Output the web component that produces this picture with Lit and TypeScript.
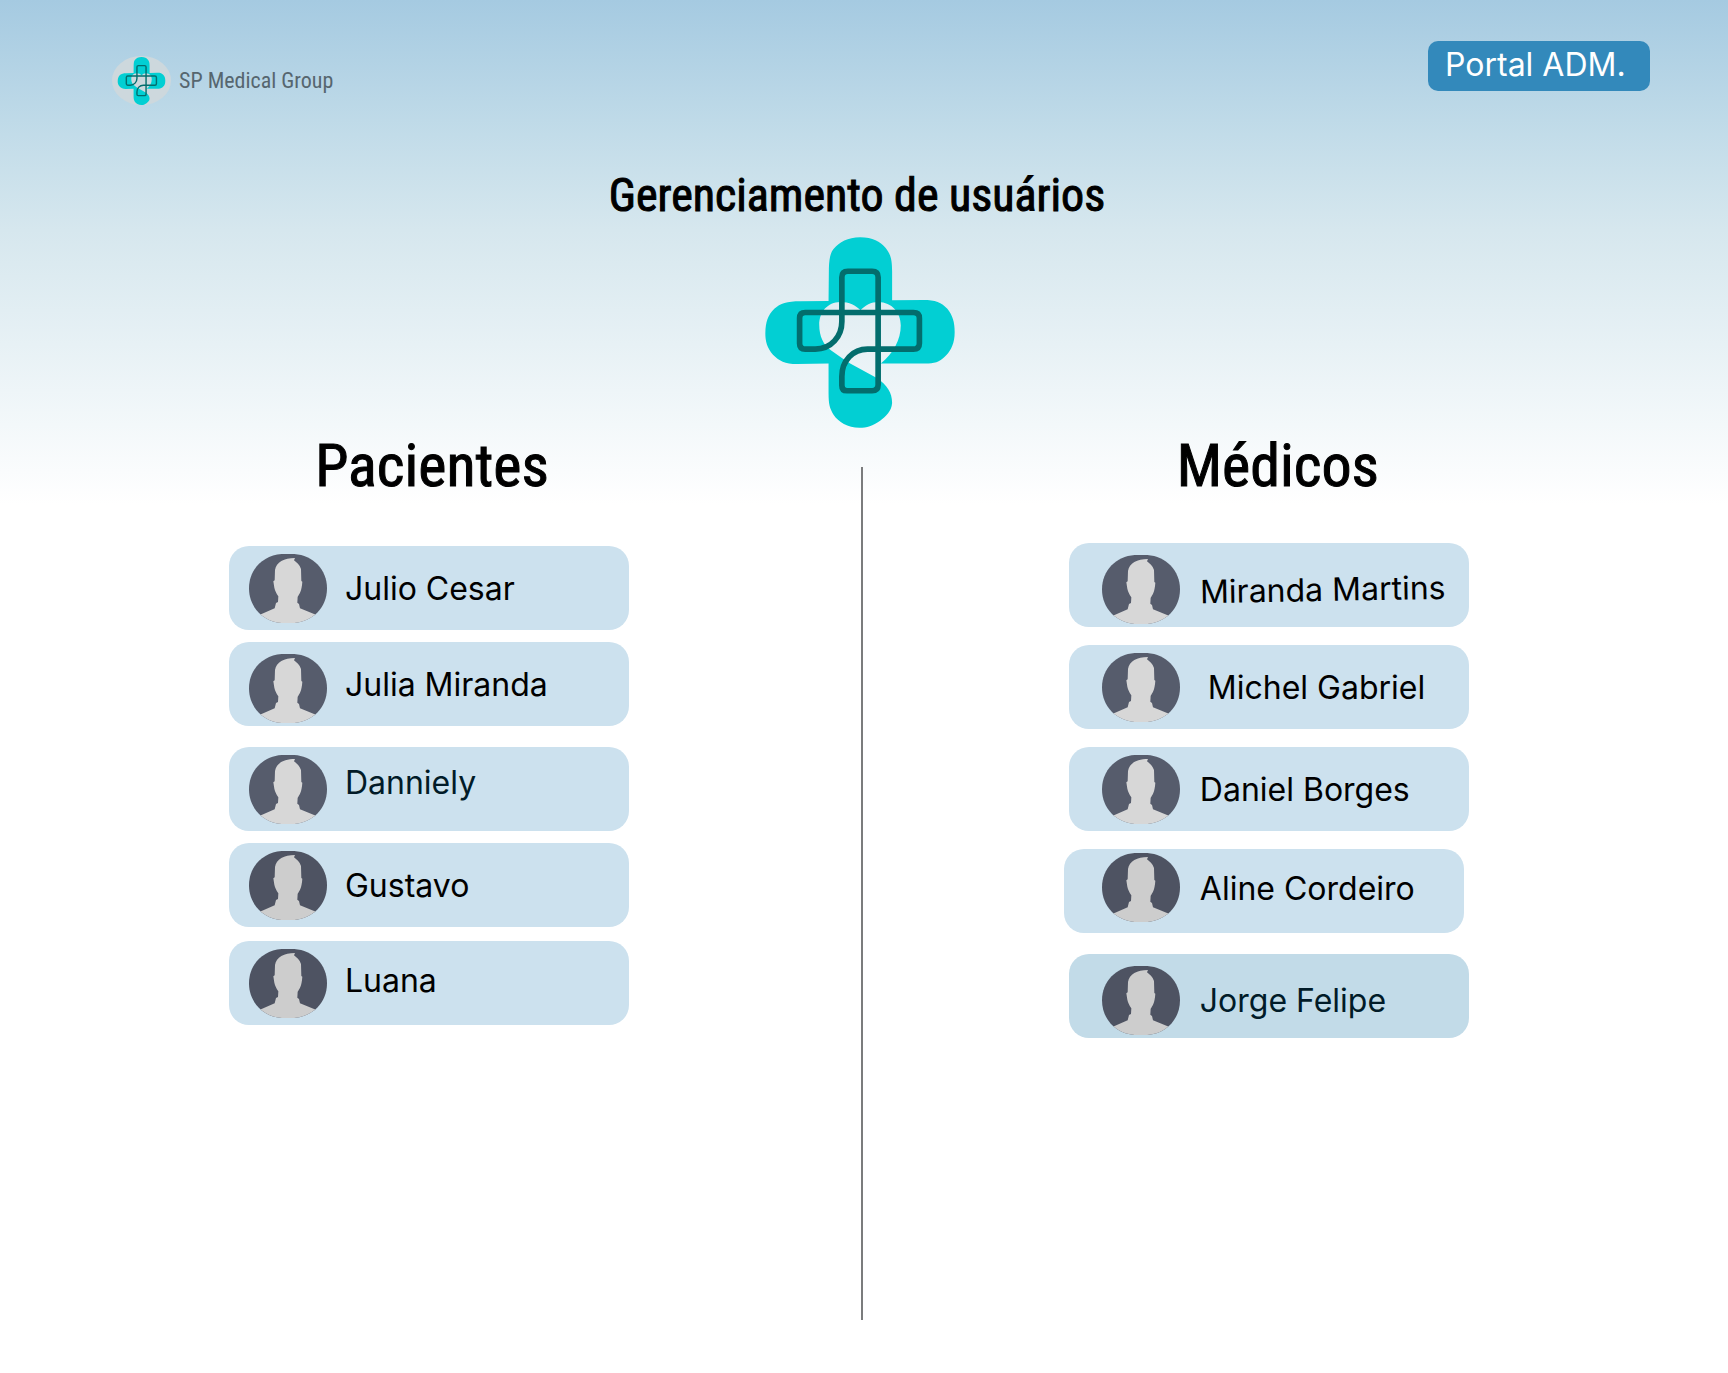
import { LitElement, html, css, svg } from "lit";
import { customElement, property } from "lit/decorators.js";
import { classMap } from "lit/directives/class-map.js";

type Level = "high" | "raised" | "mid" | "low";
type Gap = "none" | "tight" | "small" | "medium" | "large";

interface User {
  name: string;
  gap: Gap;
  photo: Level;
  text: Level;
  deep?: boolean;
  shaded?: boolean;
  ink?: boolean;
  outset?: boolean;
  indent?: boolean;
  tilt?: boolean;
}

const patients: User[] = [
  { name: "Julio Cesar", gap: "none", photo: "mid", text: "mid" },
  { name: "Julia Miranda", gap: "tight", photo: "low", text: "mid" },
  { name: "Danniely", gap: "large", photo: "mid", text: "high", ink: true },
  { name: "Gustavo", gap: "tight", photo: "mid", text: "mid", shaded: true },
  { name: "Luana", gap: "small", photo: "mid", text: "raised", shaded: true },
];

const doctors: User[] = [
  { name: "Miranda Martins", gap: "none", photo: "low", text: "low", tilt: true },
  { name: "Michel Gabriel", gap: "medium", photo: "mid", text: "mid", indent: true },
  { name: "Daniel Borges", gap: "medium", photo: "mid", text: "mid" },
  { name: "Aline Cordeiro", gap: "medium", photo: "high", text: "raised", shaded: true, outset: true },
  { name: "Jorge Felipe", gap: "large", photo: "low", text: "low", shaded: true, deep: true, ink: true },
];

@customElement("medical-logo")
export class MedicalLogo extends LitElement {
  static styles = css`
    :host { display: block; }
    .mark { display: block; width: 100%; height: 100%; }
    .body { fill: #02cfd3; }
    .line { fill: none; stroke: #036d6d; stroke-width: 17; stroke-linejoin: round; }
  `;
  render() {
    return html`<svg class="mark" viewBox="44 36 571 574" aria-hidden="true">
      ${svg`
      <path class="body" d="M235 228 L236 130 C237 95 243 80 250 72 C268 52 292 37 330 37 C368 37 390 50 406 68
        C420 86 426 100 426 140 L426 226 L520 225 C555 225 575 232 592 252 C608 272 614 292 614 322
        C614 355 603 375 590 390 C574 407 560 416 535 416 L392 416
        C430 385 452 345 452 302 C452 262 425 232 385 231 C362 231 345 241 331 256
        C317 241 298 231 270 231 C232 232 207 260 207 300 C207 335 220 362 243 377
        L275 400 L300 416 L380 460 C412 482 426 505 426 535 C424 560 408 575 390 588
        C368 604 350 609 328 609 C292 609 265 592 250 570 C239 552 235 540 235 505 L235 416 L140 418
        C105 418 85 408 68 390 C50 368 45 350 45 325 C46 292 52 272 72 252 C90 235 110 229 150 229 Z"/>
      <path class="line" d="M384 263 L384 480 Q384 498 366 498 L290 498 Q275 498 275 482 L275 455
        C275 408 308 373 352 373 L490 373 Q508 373 508 355 L508 280 Q508 263 490 263 L165 263
        Q148 263 148 280 L148 356 Q148 373 165 373 L195 373 C243 373 275 335 275 290
        L275 157 Q275 139 293 139 L366 139 Q384 139 384 157 Z"/>`}
    </svg>`;
  }
}

@customElement("user-photo")
export class UserPhoto extends LitElement {
  @property({ type: Boolean, reflect: true }) shaded = false;
  static styles = css`
    :host { display: block; width: 78px; height: 69px; --back: #565c6c; --figure: #d7d7d7; }
    :host([shaded]) { --back: #4e5362; --figure: #cdcdcd; }
    .photo { display: block; width: 100%; height: 100%; }
    .back { fill: var(--back); }
    .figure { fill: var(--figure); }
  `;
  render() {
    return html`<svg class="photo" viewBox="0 0 234 207" aria-hidden="true">
      ${svg`
      <clipPath id="round"><path d="M98 0 H136 C192 4 234 46 234 103 C234 160 192 203 136 207 H98 C42 203 0 160 0 103 C0 46 42 4 98 0Z"/></clipPath>
      <g clip-path="url(#round)">
        <rect class="back" width="234" height="207"/>
        <path class="figure" d="M138 12 L135 19 C143 26 152 32 156 45 L157 81 L160 83 C159 96 157 108 154 114
          C151 120 149 124 146 128 L145 146 L150 150 L153 163 L197 181 L240 200 V210 H-6 V200 L36 181 L77 163 L81 147 L87 144
          L88 127 C82 118 78 110 76 101 L73 82 L77 79 L78 48 C82 24 105 12 138 12Z"/>
      </g>`}
    </svg>`;
  }
}

@customElement("user-column")
export class UserColumn extends LitElement {
  @property() heading = "";
  @property({ type: Boolean, reflect: true }) wide = false;
  @property({ attribute: false }) users: User[] = [];
  static styles = css`
    :host { display: block; --inset: 20px; --space: 18px; --lead: 6px; --drop: 42px; }
    :host([wide]) { --inset: 33px; --space: 20px; --lead: 18px; --drop: 39px; }
    .title {
      margin: 0 0 var(--drop); padding-left: var(--lead); text-align: center; color: #000;
      font: 400 60px/76px "Roboto Condensed", "Liberation Sans Narrow", "Liberation Sans", sans-serif;
      -webkit-text-stroke: 1px currentColor;
    }
    .list { list-style: none; margin: 0; padding: 0; }
    .card {
      display: flex; align-items: flex-start; column-gap: var(--space);
      box-sizing: border-box; height: 84px; padding-left: var(--inset);
      border-radius: 20px; background: #cce1ee;
    }
    .deep { background: #c2dbe8; }
    .outset { margin-inline: -5px 5px; padding-left: 38px; }
    .gap-tight { margin-top: 12px; }
    .gap-small { margin-top: 14px; }
    .gap-medium { margin-top: 18px; }
    .gap-large { margin-top: 21px; }
    .photo-high { margin-top: 4px; }
    .photo-mid { margin-top: 8px; }
    .photo-low { margin-top: 12px; }
    .name { font: 400 32px/40px Inter, sans-serif; color: #000; white-space: nowrap; }
    .ink { color: #011b28; }
    .text-high { margin-top: 16px; }
    .text-raised { margin-top: 20px; }
    .text-mid { margin-top: 23px; }
    .text-low { margin-top: 27px; }
    .indent { margin-left: 8px; }
    .tilt { transform: rotate(-1deg); }
  `;
  render() {
    return html`<h2 class="title">${this.heading}</h2>
      <ul class="list">
        ${this.users.map((u) => html`<li class=${classMap({ card: true, [`gap-${u.gap}`]: true, deep: !!u.deep, outset: !!u.outset })}>
          <user-photo class="photo-${u.photo}" ?shaded=${!!u.shaded}></user-photo>
          <span class=${classMap({ name: true, [`text-${u.text}`]: true, ink: !!u.ink, indent: !!u.indent, tilt: !!u.tilt })}>${u.name}</span>
        </li>`)}
      </ul>`;
  }
}

@customElement("app-root")
export class AppRoot extends LitElement {
  static styles = css`
    :host { display: block; }
    .page {
      display: flex; flex-direction: column; box-sizing: border-box; min-height: 100vh;
      padding-bottom: 53px;
      background: linear-gradient(#a5cae1 0, #c2dce9 135px, #d6e7ee 230px, #fff 505px);
    }
    .top {
      display: flex; justify-content: space-between; align-items: flex-start;
      padding: 41px 78px 0 112px;
    }
    .brand {
      display: flex; align-items: center; gap: 8px; margin-top: 15px;
      text-decoration: none; color: #56666f;
      font: 400 22px/32px "Roboto Condensed", "Liberation Sans Narrow", "Liberation Sans", sans-serif;
    }
    .badge {
      display: grid; place-items: center; width: 59px; height: 49px;
      border-radius: 50%; background: #cdd8dd;
    }
    .badge-logo { width: 49px; height: 48px; }
    .portal {
      box-sizing: border-box; width: 222px; height: 50px; margin: 0; padding: 0 0 2px 17px;
      border: 0; border-radius: 10px; background: #3389bb; color: #fff;
      font: 400 32px/48px Inter, sans-serif; text-align: left; white-space: nowrap;
    }
    .hero { display: flex; flex-direction: column; align-items: center; padding: 60px 0 0; }
    .title {
      margin: 0 14px 12px 0; color: #000;
      font: 400 46px/60px "Roboto Condensed", "Liberation Sans Narrow", "Liberation Sans", sans-serif;
      -webkit-text-stroke: 1px currentColor;
    }
    .hero-logo { width: 190px; height: 191px; margin-right: 8px; }
    .columns {
      display: grid; grid-template-columns: 400px 1fr 400px; flex: 1;
      padding: 0 15% 0 13.25%;
    }
    .divider { justify-self: center; width: 2px; margin: 39px 0 0 26px; background: #7b7c7d; }
  `;
  render() {
    return html`<div class="page">
      <header class="top">
        <a class="brand" href="#"><span class="badge"><medical-logo class="badge-logo"></medical-logo></span>SP Medical Group</a>
        <button class="portal" type="button">Portal ADM.</button>
      </header>
      <div class="hero">
        <h1 class="title">Gerenciamento de usuários</h1>
        <medical-logo class="hero-logo"></medical-logo>
      </div>
      <main class="columns">
        <user-column heading="Pacientes" .users=${patients}></user-column>
        <div class="divider"></div>
        <user-column wide heading="Médicos" .users=${doctors}></user-column>
      </main>
    </div>`;
  }
}
